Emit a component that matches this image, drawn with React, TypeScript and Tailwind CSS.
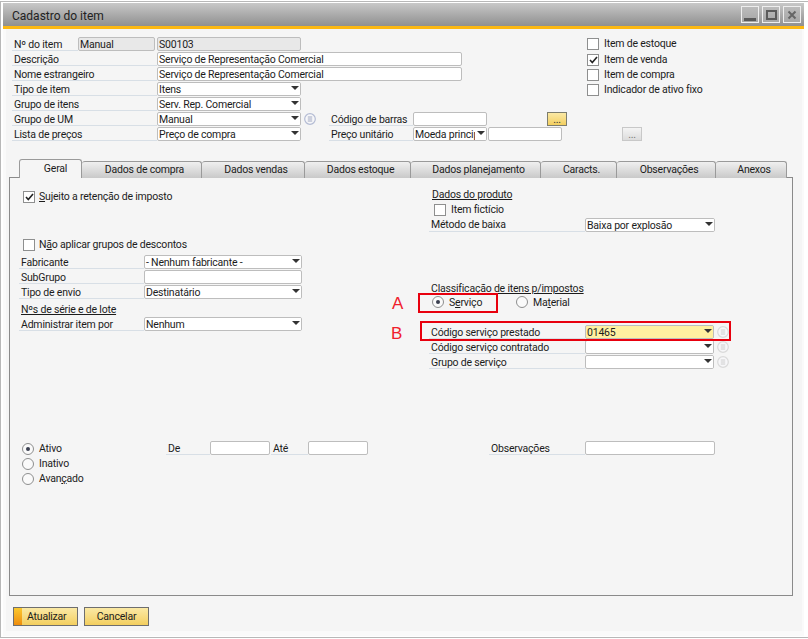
import type { ReactNode } from "react";

const tabs = [
  { name: "Geral", w: "w-[63px]" },
  { name: "Dados de compra", w: "w-[120px]" },
  { name: "Dados vendas", w: "w-[103px]" },
  { name: "Dados estoque", w: "w-[106px]" },
  { name: "Dados planejamento", w: "w-[130px]" },
  { name: "Caracts.", w: "w-[76px]" },
  { name: "Observações", w: "w-[99px]" },
  { name: "Anexos", w: "w-[71px]" },
];

function Label({ children, className }: { children: ReactNode; className: string }) {
  return (
    <div className={`h-[14px] leading-[16px] border-b border-[#d8dfe6] pl-[2px] shrink-0 whitespace-nowrap ${className}`}>
      {children}
    </div>
  );
}

function Field({ children, className, bg = "bg-white" }: { children?: ReactNode; className: string; bg?: string }) {
  return (
    <div className={`h-[14px] leading-[14px] border border-[#bdbdbd] rounded-[2px] pl-[1px] overflow-hidden whitespace-nowrap shrink-0 ${bg} ${className}`}>
      {children}
    </div>
  );
}

function Select({ children, className, bg = "bg-white" }: { children?: ReactNode; className: string; bg?: string }) {
  return (
    <div className={`relative h-[14px] leading-[14px] border border-[#bdbdbd] rounded-[2px] pl-[1px] overflow-hidden whitespace-nowrap shrink-0 ${bg} ${className}`}>
      {children}
      <span className={`absolute right-0 top-0 bottom-0 w-[11px] flex items-start justify-center pt-[3px] ${bg}`}>
        <svg width="8" height="4" viewBox="0 0 8 4">
          <path d="M0 0H8L4 4Z" fill="#333" />
        </svg>
      </span>
    </div>
  );
}

function InfoDot({ faded }: { faded?: boolean }) {
  return (
    <svg width="12" height="12" viewBox="0 0 12 12" className="shrink-0">
      <circle cx="6" cy="6" r="5.3" fill="#f7f7f9" stroke={faded ? "#dadada" : "#b4bcd4"} strokeWidth="1.2" />
      <path d="M3.8 4H8.2M3.8 6H8.2M3.8 8H8.2" stroke={faded ? "#c4c4c4" : "#8c96b4"} strokeWidth="0.8" />
    </svg>
  );
}

function Check({ on }: { on?: boolean }) {
  return (
    <span className="w-[12px] h-[12px] border border-[#8e8f8f] bg-white flex items-center justify-center shrink-0">
      {on && (
        <svg width="9" height="8" viewBox="0 0 9 8">
          <path d="M1 4L3.3 6.5L8 1" fill="none" stroke="#222" strokeWidth="1.6" />
        </svg>
      )}
    </span>
  );
}

function Radio({ on }: { on?: boolean }) {
  return (
    <span className="w-[12px] h-[12px] rounded-full border border-[#8e8f8f] bg-[#fafafa] flex items-center justify-center shrink-0">
      {on && <span className="w-[4px] h-[4px] rounded-full bg-[#3a3f50]" />}
    </span>
  );
}

function MiniButton({ active }: { active?: boolean }) {
  return (
    <div
      className={
        active
          ? "w-[20px] h-[14px] shrink-0 border border-[#7d7d6d] bg-gradient-to-b from-[#fbe9a4] to-[#f3cf5e] flex items-end justify-center leading-[10px] text-[#333]"
          : "w-[20px] h-[14px] shrink-0 border border-[#c8c8c8] bg-gradient-to-b from-[#f4f4f4] to-[#dcdcdc] flex items-end justify-center leading-[10px] text-[#777]"
      }
    >
      ...
    </div>
  );
}

function WindowButton({ children }: { children: ReactNode }) {
  return (
    <div className="w-[18px] h-[17px] border-[1.5px] border-[#eeeeee] bg-gradient-to-b from-[#bcbcbc] to-[#a6a6a6] flex items-center justify-center">
      {children}
    </div>
  );
}

export default function App() {
  return (
    <div
      className="w-[808px] h-[639px] bg-white overflow-hidden pt-[1px] text-[10.5px] tracking-[-0.2px] text-[#1c1c1c]"
      style={{ fontFamily: 'Roboto, "Noto Sans", sans-serif' }}
    >
      <div className="relative w-[808px] h-[637px] border-l border-t border-b border-[#b8b8b8] pl-[2px] pr-[4px] pt-[1px] pb-[1px] flex flex-col">
        {/* title bar */}
        <div className="h-[23px] shrink-0 bg-gradient-to-b from-[#c8c8c8] to-[#909090] flex items-start justify-between pl-[9px] pr-[3px]">
          <span className="mt-[5px] text-[12px] tracking-normal leading-[16px] text-[#222]">Cadastro do item</span>
          <div className="flex gap-[3px] mt-[3px]">
            <WindowButton>
              <span className="w-[12px] h-[3px] bg-[#5a5a5a] mt-[9px]" />
            </WindowButton>
            <WindowButton>
              <span className="w-[11px] h-[10px] border-2 border-[#5a5a5a]" />
            </WindowButton>
            <WindowButton>
              <svg width="10" height="10" viewBox="0 0 10 10">
                <path d="M1.5 1.5L8.5 8.5M8.5 1.5L1.5 8.5" stroke="#666" strokeWidth="2" />
              </svg>
            </WindowButton>
          </div>
        </div>
        <div className="h-[3px] shrink-0 bg-[#fcb813]" />

        <div className="flex-1 min-h-0 bg-[#f5f5f5] border-l-[3px] border-r-[2px] border-b-[5px] border-[#fafafa] flex flex-col">
          {/* header form */}
          <div className="flex pt-[8px] pl-[6px] h-[130px] shrink-0">
            <div className="w-[575px] shrink-0 flex flex-col gap-[1px]">
              <div className="flex items-start">
                <Label className="w-[66px]">Nº do item</Label>
                <Field className="w-[77px] mr-[2px]" bg="bg-[#e8e8e8]">Manual</Field>
                <Field className="w-[144px]" bg="bg-[#e8e8e8]">S00103</Field>
              </div>
              <div className="flex items-start">
                <Label className="w-[145px]">Descrição</Label>
                <Field className="w-[305px]">Serviço de Representação Comercial</Field>
              </div>
              <div className="flex items-start">
                <Label className="w-[145px]">Nome estrangeiro</Label>
                <Field className="w-[305px]">Serviço de Representação Comercial</Field>
              </div>
              <div className="flex items-start">
                <Label className="w-[145px]">Tipo de item</Label>
                <Select className="w-[144px]">Itens</Select>
              </div>
              <div className="flex items-start">
                <Label className="w-[145px]">Grupo de itens</Label>
                <Select className="w-[144px]">Serv. Rep. Comercial</Select>
              </div>
              <div className="flex items-start">
                <Label className="w-[145px]">Grupo de UM</Label>
                <Select className="w-[144px]">Manual</Select>
                <div className="ml-[3px] mr-[13px] pt-[1px]"><InfoDot /></div>
                <Label className="w-[84px]">Código de barras</Label>
                <Field className="w-[74px] mr-[60px]" />
                <MiniButton active />
              </div>
              <div className="flex items-start">
                <Label className="w-[145px]">Lista de preços</Label>
                <Select className="w-[144px]">Preço de compra</Select>
                <div className="w-[28px] shrink-0" />
                <Label className="w-[84px]">Preço unitário</Label>
                <Select className="w-[74px] mr-[1px]">Moeda principal</Select>
                <Field className="w-[74px] mr-[60px]" />
                <MiniButton />
              </div>
            </div>
            <div className="flex flex-col">
              <div className="h-[13px] flex items-center gap-[5px]"><Check /><span className="mt-[1px]">Item de estoque</span></div>
              <div className="h-[15px] mt-[2px] flex items-center gap-[5px]"><Check on /><span className="mt-[1px]">Item de venda</span></div>
              <div className="h-[15px] flex items-center gap-[5px]"><Check /><span className="mt-[1px]">Item de compra</span></div>
              <div className="h-[15px] flex items-center gap-[5px]"><Check /><span className="mt-[1px]">Indicador de ativo fixo</span></div>
            </div>
          </div>

          {/* tabs */}
          <div className="flex pl-[13px] h-[19px] shrink-0 -mb-[1px] z-10">
            {tabs.map((t, i) => (
              <div
                key={t.name}
                className={
                  i === 0
                    ? `${t.w} h-[19px] bg-[#f5f5f5] border border-b-0 border-[#9a9a9a] rounded-t-[3px] flex items-center justify-center pl-[10px]`
                    : `${t.w} h-[17px] mt-[2px] bg-gradient-to-b from-[#f0f0f0] to-[#c9c9c9] border border-b-0 border-l-0 border-[#9a9a9a] rounded-t-[3px] flex items-center justify-center pl-[6px]`
                }
              >
                {t.name}
              </div>
            ))}
          </div>

          {/* tab panel */}
          <div className="ml-[3px] w-[784px] h-[419px] shrink-0 border border-[#8a8a8a] flex flex-col">
            <div className="flex h-[263px] shrink-0">
              <div className="w-[419px] shrink-0 pl-[9px]">
                <div className="flex items-center gap-[4px] ml-[4px] mt-[13px] h-[12px]">
                  <Check on />
                  <span><u>S</u>ujeito a retenção de imposto</span>
                </div>
                <div className="flex items-center gap-[4px] ml-[4px] mt-[36px] h-[12px]">
                  <Check />
                  <span>N<u>ã</u>o aplicar grupos de descontos</span>
                </div>
                <div className="mt-[4px] flex flex-col gap-[1px]">
                  <div className="flex items-start">
                    <Label className="w-[125px]">Fabricante</Label>
                    <Select className="w-[158px]">- Nenhum fabricante -</Select>
                  </div>
                  <div className="flex items-start">
                    <Label className="w-[125px]">SubGrupo</Label>
                    <Field className="w-[158px]" />
                  </div>
                  <div className="flex items-start">
                    <Label className="w-[125px]">Tipo de envio</Label>
                    <Select className="w-[158px]">Destinatário</Select>
                  </div>
                </div>
                <div className="mt-[4px] h-[14px] leading-[14px] pl-[2px] underline">Nºs de série e de lote</div>
                <div className="flex items-start">
                  <Label className="w-[125px]">Administrar item por</Label>
                  <Select className="w-[158px]">Nenhum</Select>
                </div>
              </div>

              <div className="flex-1">
                <div className="mt-[9px] h-[14px] leading-[16px] pl-[3px] underline">Dados do produto</div>
                <div className="flex items-center gap-[5px] ml-[5px] mt-[3px] h-[12px]">
                  <Check />
                  <span>Item fictício</span>
                </div>
                <div className="flex items-start mt-[2px]">
                  <Label className="w-[156px]"><span className="block -mt-[1px]">Método de baixa</span></Label>
                  <Select className="w-[130px]">Baixa por explosão</Select>
                </div>
                <div className="mt-[49px] h-[14px] leading-[16px] pl-[2px] underline">Classificação de itens p/impostos</div>
                <div className="flex items-center mt-[1px] ml-[3px] h-[12px]">
                  <Radio on />
                  <span className="ml-[5px] mt-[1px] w-[67px]">S<u>e</u>rviço</span>
                  <Radio />
                  <span className="ml-[5px] mt-[1px]">Ma<u>t</u>erial</span>
                </div>
                <div className="mt-[17px] flex flex-col gap-[1px]">
                  <div className="flex items-start">
                    <Label className="w-[156px]">Código serviço prestado</Label>
                    <Select className="w-[129px]" bg="bg-[#fff0a0]">01465</Select>
                    <div className="ml-[3px] pt-[1px]"><InfoDot faded /></div>
                  </div>
                  <div className="flex items-start">
                    <Label className="w-[156px]">Código serviço contratado</Label>
                    <Select className="w-[129px]" />
                    <div className="ml-[3px] pt-[1px]"><InfoDot faded /></div>
                  </div>
                  <div className="flex items-start">
                    <Label className="w-[156px]">Grupo de serviço</Label>
                    <Select className="w-[129px]" />
                    <div className="ml-[3px] pt-[1px]"><InfoDot faded /></div>
                  </div>
                </div>
              </div>
            </div>

            {/* status row */}
            <div className="flex pl-[12px]">
              <div className="w-[144px] shrink-0 flex flex-col">
                <div className="flex items-center gap-[5px] h-[15px]"><Radio on /><span className="mt-[1px]">Ativo</span></div>
                <div className="flex items-center gap-[5px] h-[15px]"><Radio /><span className="mt-[1px]">Inativo</span></div>
                <div className="flex items-center gap-[5px] h-[15px]"><Radio /><span className="mt-[1px]">Avan<u>ç</u>ado</span></div>
              </div>
              <div className="flex items-start">
                <Label className="w-[44px]">De</Label>
                <Field className="w-[60px] mr-[1px]" />
                <Label className="w-[37px]">Até</Label>
                <Field className="w-[60px] mr-[121px]" />
                <Label className="w-[96px]">Observações</Label>
                <Field className="w-[130px]" />
              </div>
            </div>
          </div>

          {/* footer */}
          <div className="flex gap-[6px] pl-[7px] mt-[11px]">
            <div className="w-[65px] h-[19px] border border-[#6e6e6e] bg-gradient-to-b from-[#fbe9a4] to-[#f3cf5e] flex items-center">
              <span className="w-[8px] h-full bg-gradient-to-b from-[#fbc92e] to-[#ee8c0c] shrink-0" />
              <span className="ml-[5px]">Atualizar</span>
            </div>
            <div className="w-[65px] h-[19px] border border-[#6e6e6e] bg-gradient-to-b from-[#fbe9a4] to-[#f3cf5e] flex items-center justify-center">
              Cancelar
            </div>
          </div>
        </div>

        {/* red annotations on top of the screenshot */}
        <div className="absolute left-[417px] top-[291px] w-[80px] h-[20px] border-2 border-[#e8000e]" />
        <div className="absolute left-[419px] top-[319px] w-[311px] h-[20px] border-2 border-[#e8000e]" />
        <span className="absolute left-[391px] top-[292px] text-[17px] tracking-normal leading-[20px] text-[#f0202c]" style={{ fontFamily: '"Liberation Sans", sans-serif' }}>A</span>
        <span className="absolute left-[390px] top-[322px] text-[17px] tracking-normal leading-[20px] text-[#f0202c]" style={{ fontFamily: '"Liberation Sans", sans-serif' }}>B</span>
      </div>
    </div>
  );
}
